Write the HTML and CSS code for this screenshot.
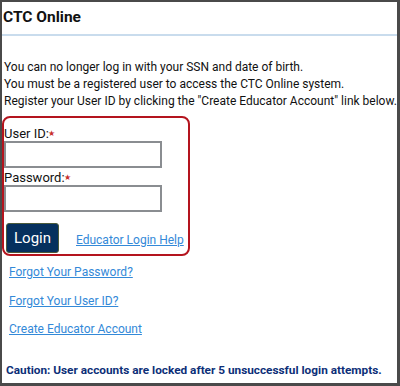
FILE: index.html
```html
<!DOCTYPE html>
<html lang="en">
<head>
<meta charset="utf-8">
<title>CTC Online</title>
<link rel="stylesheet" href="styles.css">
</head>
<body>
<article class="ctc">
  <h1 class="head">CTC Online</h1>
  <p class="guide">
    You can no longer log in with your SSN and date of birth.<br>
    You must be a registered user to access the CTC Online system.<br>
    Register your User ID by clicking the "Create Educator Account" link below.
  </p>
  <form class="login">
    <label for="userId">User ID:<span class="req">★</span></label>
    <input type="text" id="userId" name="userId">
    <label for="pwd">Password:<span class="req">★</span></label>
    <input type="password" id="pwd" name="pwd">
    <div class="btn-area">
      <button type="submit">Login</button>
      <a href="#">Educator Login Help</a>
    </div>
  </form>
  <ul class="links">
    <li><a href="#">Forgot Your Password?</a></li>
    <li><a href="#">Forgot Your User ID?</a></li>
    <li><a href="#">Create Educator Account</a></li>
  </ul>
  <p class="caution">Caution: User accounts are locked after 5 unsuccessful login attempts.</p>
</article>
</body>
</html>
```

FILE: styles.css
```css
*{margin:0;padding:0;box-sizing:border-box}
html,body{width:400px;height:386px;overflow:hidden}
body{font-family:Roboto,"Liberation Sans",sans-serif;font-size:12px;color:#111;background:#fff}
.ctc{width:400px;height:386px;border:2px solid #4a4a4a;border-right-width:3px;border-bottom-width:3px}
.ctc .head{height:34px;padding:5px 0 0 1px;font-size:15.5px;font-weight:bold;line-height:20px;border-bottom:2px solid #c9dced}
.ctc .guide{margin-top:23px;padding-left:2px;line-height:17px;white-space:nowrap}
.login{width:188px;height:140px;margin-top:6px;padding:8px 0 0 0;border:2px solid #b4141e;border-radius:8px;display:flex;flex-direction:column;align-items:flex-start}
.login label{font-size:13px;line-height:15px}
.login .req{display:inline-block;color:#c8312d;font-size:8px;vertical-align:2px;margin-left:-1px}
.login input{width:158px;height:27px;margin:0 0 2px;border:2px solid #8a8d91;background:#fff}
.login .btn-area{display:flex;align-items:center;gap:17px;margin:9px 0 0 2px}
.login button{width:53px;height:30px;padding-bottom:1px;border:1px solid #4b5a3a;border-radius:3px;background:#05305e;color:#fff;font-family:inherit;font-size:15px}
.login .btn-area a{margin-top:3px;font-size:12px}
a{color:#3389d8;text-decoration:underline}
.links{list-style:none;margin-top:8px;padding-left:7px}
.links li{height:28.5px;line-height:16px}
.caution{margin-top:12px;padding-left:4px;font-weight:bold;font-size:11.8px;line-height:16px;color:#0d2f78;white-space:nowrap}
```
